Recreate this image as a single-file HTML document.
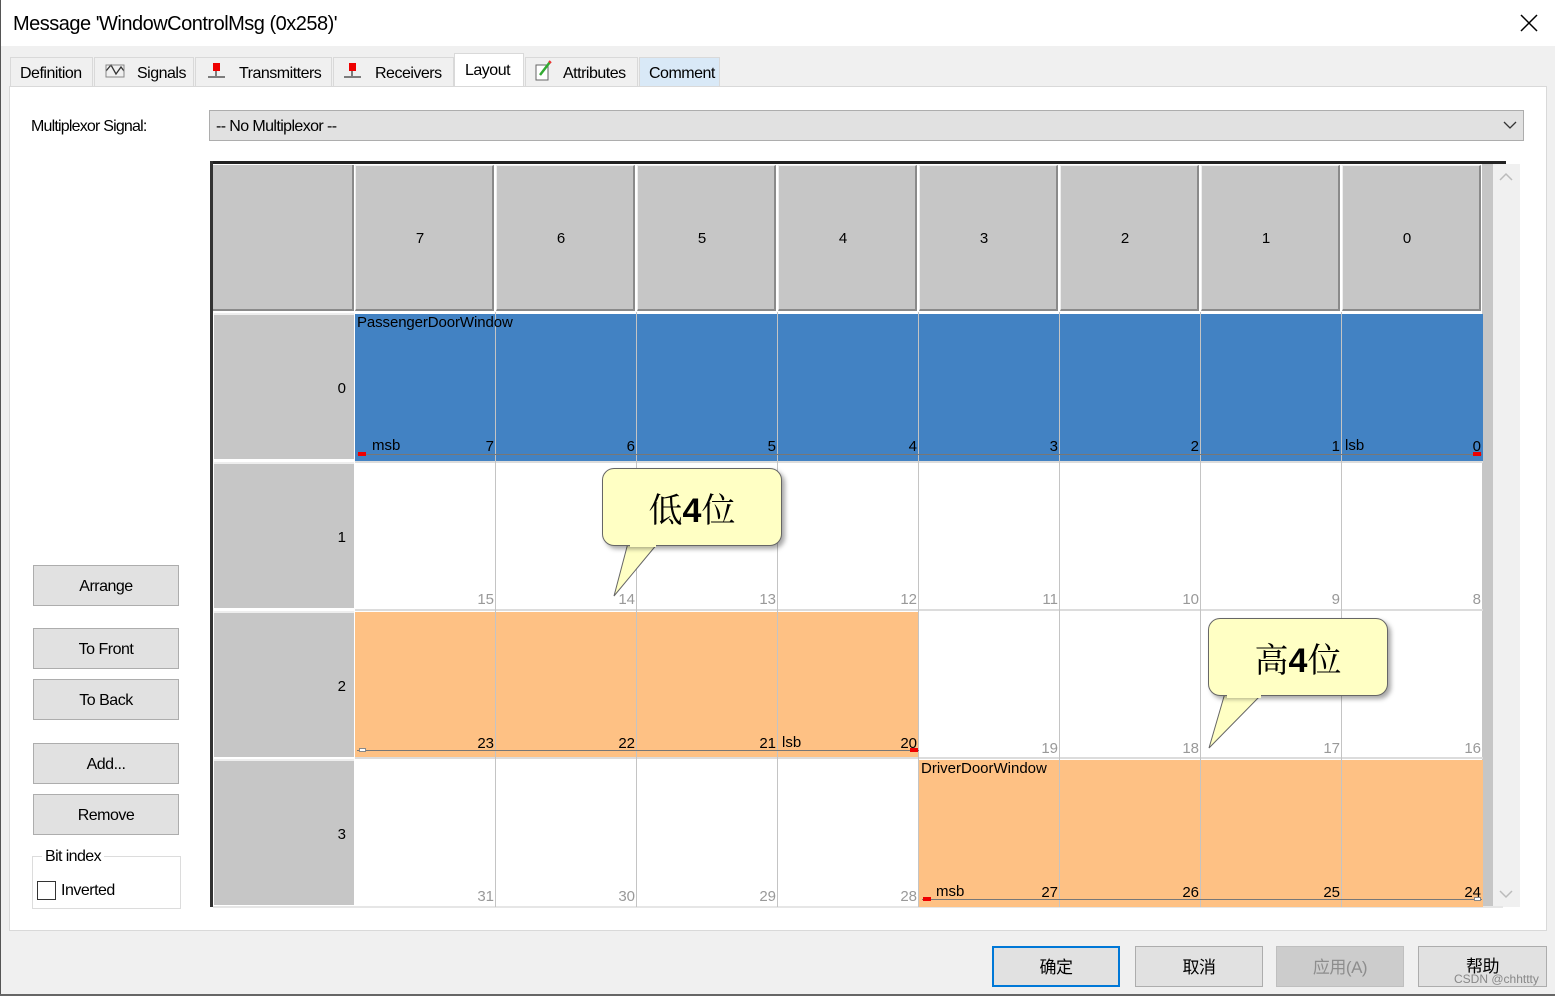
<!DOCTYPE html>
<html><head><meta charset="utf-8"><style>
*{box-sizing:border-box;margin:0;padding:0}
body{width:1555px;height:996px;background:#f0f0f0;font-family:"Liberation Sans","Noto Sans CJK SC",sans-serif;position:relative;overflow:hidden;font-size:15px;color:#000}
.a{position:absolute}
.tab{position:absolute;top:57px;height:29px;border:1px solid #d9d9d9;border-bottom:none;background:#f0f0f0;font-size:16px;line-height:31px;padding-left:9px;letter-spacing:-0.5px}
.btn{position:absolute;background:#e1e1e1;border:1px solid #adadad;text-align:center;font-size:16px;letter-spacing:-0.5px}
.hc{position:absolute;top:165px;height:146px;width:139px;background:#c6c6c6;border-right:2px solid #8a8a8a;border-bottom:2px solid #8a8a8a;border-left:1px solid #eee;border-top:1px solid #eee;text-align:center;line-height:146px;font-size:15px;text-indent:-8px}
.rh{position:absolute;left:214px;width:140px;height:146px;background:#c6c6c6;border-top:2px solid #eee;text-align:right;padding-right:8px;font-size:15px}
.vl{position:absolute;top:312px;width:1px;height:595px;background:#c4c4c4}
.hl{position:absolute;left:355px;width:1128px;height:2px;background:#dcdcdc}
.n{position:absolute;font-size:15px;text-align:right;width:40px}
.g{color:#999}
.bubble{position:absolute;width:180px;height:78px;background:#ffffc4;border:1px solid #666;border-radius:12px;box-shadow:3px 3px 5px rgba(0,0,0,.35);text-align:center;font-size:34px;line-height:78px;font-family:"Noto Serif CJK SC","Noto Sans CJK SC",serif}
.bubble b{font-family:"Liberation Sans",sans-serif;font-weight:bold}
</style></head><body>
<div class="a" style="left:0;top:0;width:1555px;height:46px;background:#fff"></div>
<div class="a" style="left:0;top:0;width:1px;height:996px;background:#555"></div>
<div class="a" style="left:13px;top:13px;font-size:20px;letter-spacing:-0.5px">Message 'WindowControlMsg (0x258)'</div>
<svg class="a" style="left:1520px;top:14px" width="18" height="18"><path d="M1 1L17 17M17 1L1 17" stroke="#000" stroke-width="1.5"/></svg>

<div class="tab" style="left:10px;width:83px">Definition</div>
<div class="tab" style="left:94px;width:100px;padding-left:42px">Signals</div>
<svg class="a" style="left:104px;top:62px" width="22" height="18"><path d="M2 9L7 3L12 12L17 5L20 9" stroke="#333" fill="none" stroke-width="1.3"/><rect x="2" y="3" width="18" height="12" fill="none" stroke="#888"/></svg>
<div class="tab" style="left:195px;width:137px;padding-left:43px">Transmitters</div>
<svg class="a" style="left:206px;top:61px" width="22" height="20"><rect x="7" y="2" width="7" height="8" fill="#e00"/><path d="M10 10V15M2 16H19" stroke="#555" stroke-width="1.5"/></svg>
<div class="tab" style="left:333px;width:121px;padding-left:41px">Receivers</div>
<svg class="a" style="left:342px;top:61px" width="22" height="20"><rect x="7" y="2" width="7" height="8" fill="#e00"/><path d="M10 10V15M2 16H19" stroke="#555" stroke-width="1.5"/></svg>
<div class="tab" style="left:454px;top:53px;height:34px;width:70px;background:#fff;padding-left:10px;line-height:33px">Layout</div>
<div class="tab" style="left:525px;width:113px;padding-left:37px">Attributes</div>
<svg class="a" style="left:533px;top:60px" width="20" height="22"><rect x="3" y="5" width="12" height="15" fill="#fff" stroke="#666"/><path d="M7 15L17 2" stroke="#3a3" stroke-width="2.5"/><path d="M16 1L18 3" stroke="#e33" stroke-width="2"/></svg>
<div class="tab" style="left:639px;width:81px;background:#d9e9f7">Comment</div>

<div class="a" style="left:9px;top:86px;width:1538px;height:845px;background:#fff;border:1px solid #d9d9d9"></div>
<div class="a" style="left:31px;top:118px;font-size:16px;letter-spacing:-0.8px">Multiplexor Signal:</div>
<div class="a" style="left:209px;top:110px;width:1315px;height:31px;background:#e1e1e1;border:1px solid #adadad;font-size:16px;line-height:31px;padding-left:6px;letter-spacing:-0.6px">-- No Multiplexor --</div>
<svg class="a" style="left:1503px;top:120px" width="14" height="10"><path d="M1 2L7 8L13 2" stroke="#333" fill="none" stroke-width="1.3"/></svg>

<div class="btn" style="left:33px;top:565px;width:146px;height:41px;line-height:41px">Arrange</div>
<div class="btn" style="left:33px;top:628px;width:146px;height:41px;line-height:41px">To Front</div>
<div class="btn" style="left:33px;top:679px;width:146px;height:41px;line-height:41px">To Back</div>
<div class="btn" style="left:33px;top:743px;width:146px;height:41px;line-height:41px">Add...</div>
<div class="btn" style="left:33px;top:794px;width:146px;height:41px;line-height:41px">Remove</div>
<div class="a" style="left:32px;top:856px;width:149px;height:53px;border:1px solid #dcdcdc"></div>
<div class="a" style="left:42px;top:848px;background:#fff;padding:0 3px;font-size:16px;letter-spacing:-0.6px">Bit index</div>
<div class="a" style="left:37px;top:881px;width:19px;height:19px;border:1px solid #333;background:#fff"></div>
<div class="a" style="left:61px;top:882px;font-size:16px;letter-spacing:-0.5px">Inverted</div>

<!-- grid -->
<div class="a" style="left:210px;top:161px;width:1296px;height:3px;background:#222"></div>
<div class="a" style="left:210px;top:161px;width:3px;height:746px;background:#333"></div>
<div class="a" style="left:213px;top:164px;width:1270px;height:743px;background:#fff"></div>
<div class="a" style="left:1482px;top:164px;width:11px;height:743px;background:#c6c6c6"></div>
<div class="a" style="left:1493px;top:164px;width:27px;height:743px;background:#f0f0f0"></div>
<svg class="a" style="left:1499px;top:172px" width="14" height="10"><path d="M1 8L7 2L13 8" stroke="#bbb" fill="none" stroke-width="1.5"/></svg>
<svg class="a" style="left:1499px;top:889px" width="14" height="10"><path d="M1 2L7 8L13 2" stroke="#bbb" fill="none" stroke-width="1.5"/></svg>
<div class="a" style="left:213px;top:906px;width:1290px;height:2px;background:#e6e6e6"></div>
<div class="a" style="left:213px;top:165px;width:141px;height:146px;background:#c6c6c6;border-right:2px solid #8a8a8a;border-bottom:2px solid #8a8a8a"></div>
<div class="hc" style="left:355px">7</div><div class="hc" style="left:496px">6</div><div class="hc" style="left:637px">5</div><div class="hc" style="left:778px">4</div><div class="hc" style="left:919px">3</div><div class="hc" style="left:1060px">2</div><div class="hc" style="left:1201px">1</div><div class="hc" style="left:1342px">0</div>

<div class="rh" style="top:313px;line-height:148px">0</div>
<div class="rh" style="top:462px;line-height:148px">1</div>
<div class="rh" style="top:611px;line-height:148px">2</div>
<div class="rh" style="top:759px;line-height:148px">3</div>

<div class="a" style="left:355px;top:314px;width:1128px;height:147px;background:#4282c3"></div>
<div class="a" style="left:355px;top:612px;width:564px;height:146px;background:#fec184"></div>
<div class="a" style="left:919px;top:760px;width:564px;height:147px;background:#fec184"></div>

<div class="hl" style="top:461px"></div><div class="hl" style="top:609px"></div><div class="hl" style="top:757px"></div>
<div class="vl" style="left:495px"></div><div class="vl" style="left:636px"></div><div class="vl" style="left:777px"></div><div class="vl" style="left:918px"></div><div class="vl" style="left:1059px"></div><div class="vl" style="left:1200px"></div><div class="vl" style="left:1341px"></div>

<div class="a" style="left:357px;top:314px;font-size:15px;letter-spacing:-0.1px">PassengerDoorWindow</div>
<div class="a" style="left:921px;top:760px;font-size:15px;letter-spacing:0px">DriverDoorWindow</div>

<!-- signal lines -->
<div class="a" style="left:357px;top:454px;width:1125px;height:1px;background:#777"></div>
<div class="a" style="left:358px;top:452px;width:8px;height:4px;background:#e00"></div>
<div class="a" style="left:1473px;top:452px;width:8px;height:4px;background:#e00"></div>
<div class="a" style="left:357px;top:750px;width:562px;height:1px;background:#777"></div>
<div class="a" style="left:359px;top:748px;width:7px;height:4px;background:#fff;border:1px solid #888"></div>
<div class="a" style="left:910px;top:748px;width:8px;height:4px;background:#e00"></div>
<div class="a" style="left:922px;top:899px;width:560px;height:1px;background:#777"></div>
<div class="a" style="left:923px;top:897px;width:8px;height:4px;background:#e00"></div>
<div class="a" style="left:1474px;top:897px;width:7px;height:4px;background:#fff;border:1px solid #888"></div>

<div class="a" style="left:372px;top:437px">msb</div>
<div class="a" style="left:1345px;top:437px">lsb</div>
<div class="a" style="left:782px;top:734px">lsb</div>
<div class="a" style="left:936px;top:883px">msb</div>

<div class="n" style="left:454px;top:438px">7</div><div class="n" style="left:595px;top:438px">6</div><div class="n" style="left:736px;top:438px">5</div><div class="n" style="left:877px;top:438px">4</div><div class="n" style="left:1018px;top:438px">3</div><div class="n" style="left:1159px;top:438px">2</div><div class="n" style="left:1300px;top:438px">1</div><div class="n" style="left:1441px;top:438px">0</div>
<div class="n g" style="left:454px;top:591px">15</div><div class="n g" style="left:595px;top:591px">14</div><div class="n g" style="left:736px;top:591px">13</div><div class="n g" style="left:877px;top:591px">12</div><div class="n g" style="left:1018px;top:591px">11</div><div class="n g" style="left:1159px;top:591px">10</div><div class="n g" style="left:1300px;top:591px">9</div><div class="n g" style="left:1441px;top:591px">8</div>
<div class="n" style="left:454px;top:735px">23</div><div class="n" style="left:595px;top:735px">22</div><div class="n" style="left:736px;top:735px">21</div><div class="n" style="left:877px;top:735px">20</div><div class="n g" style="left:1018px;top:740px">19</div><div class="n g" style="left:1159px;top:740px">18</div><div class="n g" style="left:1300px;top:740px">17</div><div class="n g" style="left:1441px;top:740px">16</div>
<div class="n g" style="left:454px;top:888px">31</div><div class="n g" style="left:595px;top:888px">30</div><div class="n g" style="left:736px;top:888px">29</div><div class="n g" style="left:877px;top:888px">28</div><div class="n" style="left:1018px;top:884px">27</div><div class="n" style="left:1159px;top:884px">26</div><div class="n" style="left:1300px;top:884px">25</div><div class="n" style="left:1441px;top:884px">24</div>

<!-- callouts -->
<svg class="a" style="left:600px;top:540px" width="70" height="60"><path d="M28 3L14 56L58 3Z" fill="#ffffc4" stroke="#666"/></svg>
<div class="bubble" style="left:602px;top:468px">低<b>4</b>位</div>
<svg class="a" style="left:1205px;top:690px" width="70" height="62"><path d="M20 3L4 58L58 3Z" fill="#ffffc4" stroke="#666"/></svg>
<div class="bubble" style="left:1208px;top:618px">高<b>4</b>位</div>
<svg class="a" style="left:1205px;top:690px" width="70" height="10"><path d="M22 6H56" stroke="#ffffc4" stroke-width="4"/></svg>
<svg class="a" style="left:600px;top:540px" width="70" height="10"><path d="M30 5H56" stroke="#ffffc4" stroke-width="4"/></svg>

<div class="btn" style="left:992px;top:946px;width:128px;height:41px;border:2px solid #0078d7;line-height:39px;font-size:17px">确定</div>
<div class="btn" style="left:1135px;top:946px;width:128px;height:41px;line-height:41px;font-size:17px">取消</div>
<div class="btn" style="left:1276px;top:946px;width:128px;height:41px;line-height:41px;font-size:17px;background:#ccc;border-color:#bfbfbf;color:#8d8d8d">应用(A)</div>
<div class="btn" style="left:1418px;top:946px;width:129px;height:41px;line-height:39px;font-size:17px">帮助</div>
<div class="a" style="left:1454px;top:972px;font-size:12px;color:#888">CSDN @chhttty</div>
<div class="a" style="left:0;top:994px;width:1555px;height:2px;background:#666"></div>
</body></html>
